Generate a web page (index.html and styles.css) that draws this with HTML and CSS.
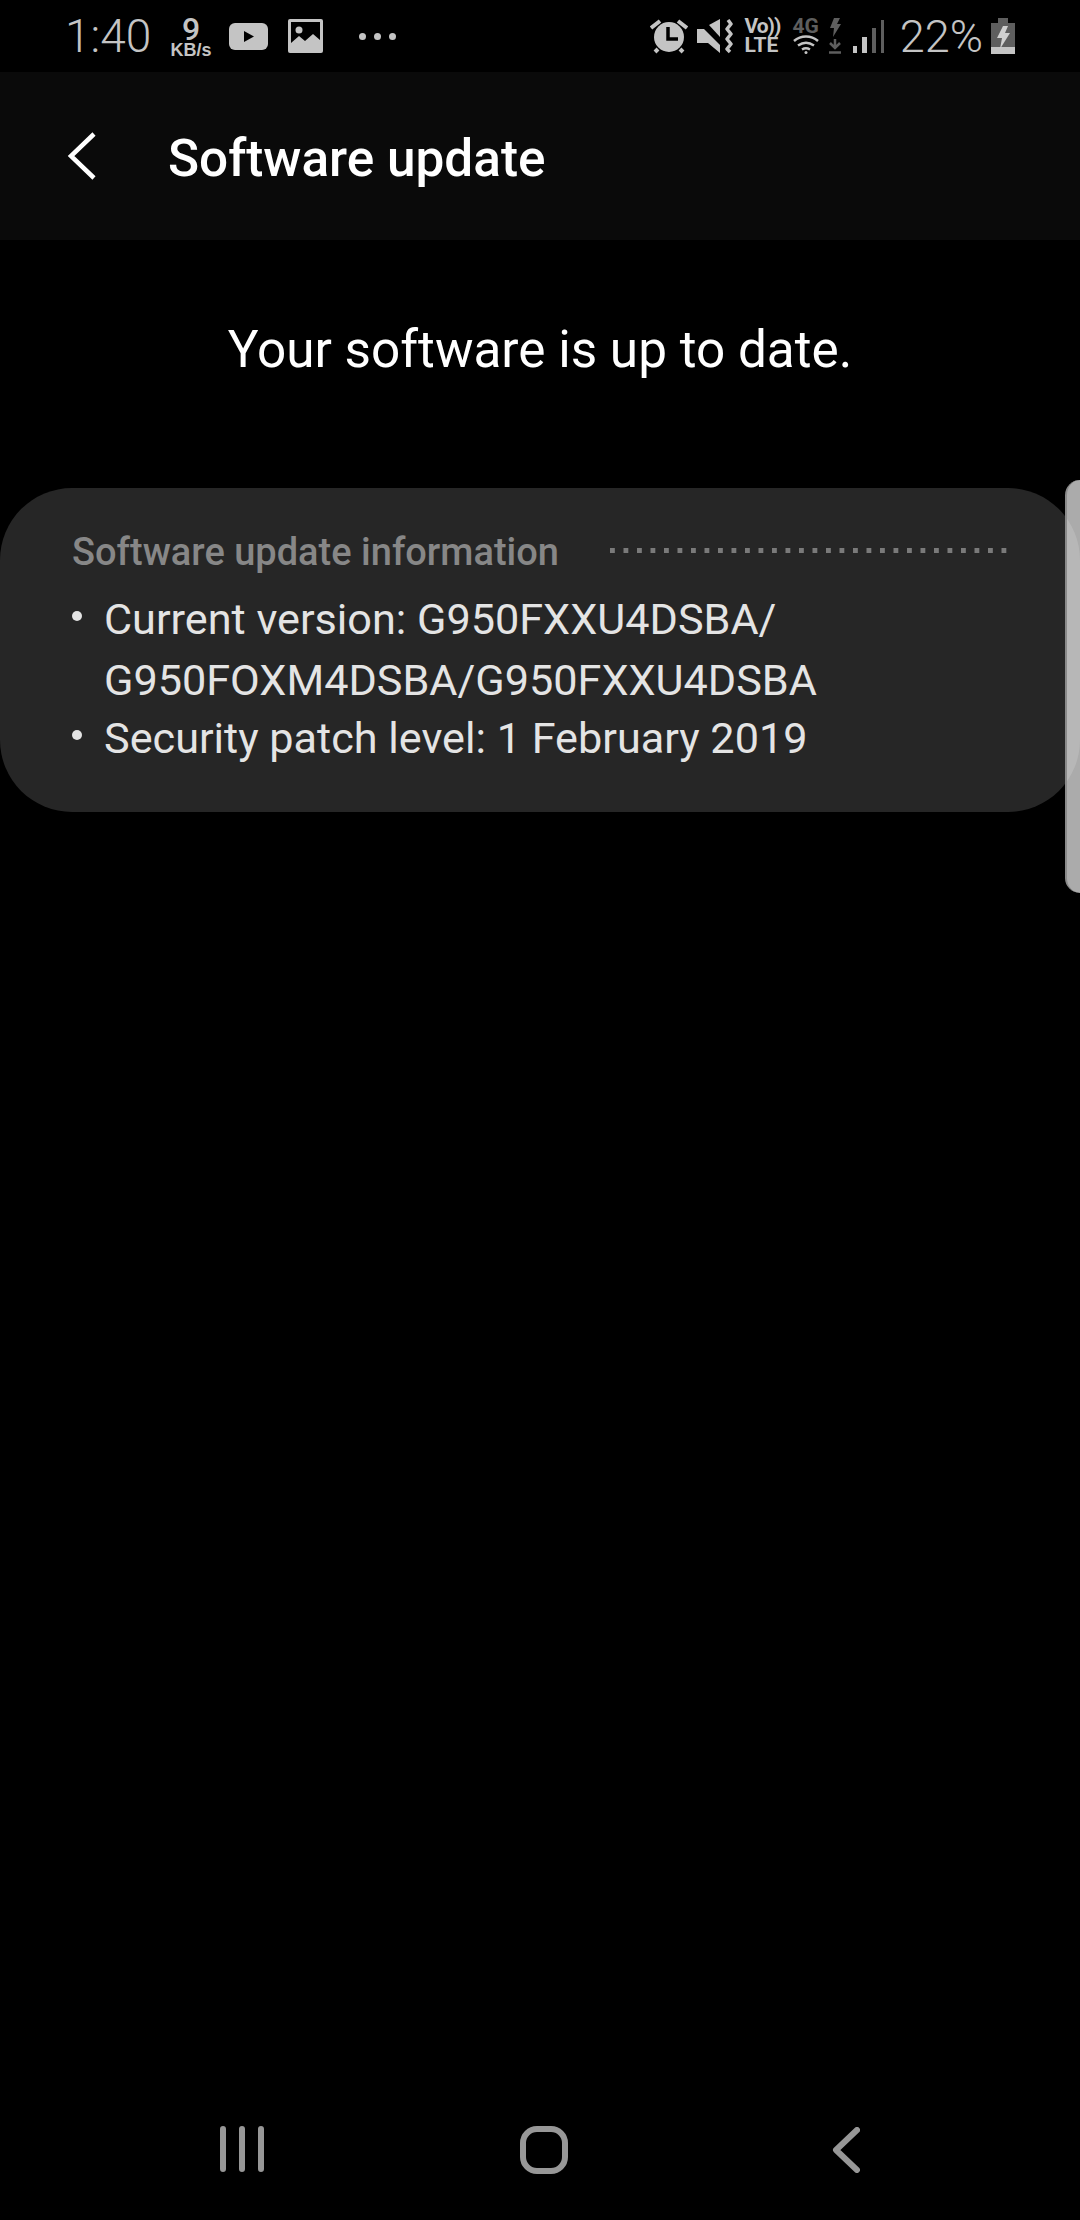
FILE: index.html
```html
<!DOCTYPE html>
<html lang="en">
<head>
  <meta charset="UTF-8">
  <meta name="viewport" content="width=device-width, initial-scale=1.0">
  <title>Software update</title>
  <link rel="stylesheet" href="styles.css">
</head>
<body>
  <div class="status-bar">
    <div class="status-left">
      <span class="clock">1:40</span>
      <span class="net-speed"><b>9</b><i>KB/s</i></span>
      <svg class="ic-yt" width="39" height="27" viewBox="0 0 39 27"><rect width="39" height="27" rx="6" fill="#c4c4c4"/><path d="M15 8l10 5.5L15 19z" fill="#000"/></svg>
      <svg class="ic-pic" width="35" height="34" viewBox="0 0 35 34"><rect width="35" height="34" rx="2" fill="#c4c4c4"/><rect x="3" y="3" width="29" height="25" fill="#000"/><circle cx="11" cy="11" r="3.5" fill="#c4c4c4"/><path d="M3 24l8-7 6 5 8-7 7 6v8H3z" fill="#c4c4c4"/></svg>
      <span class="more"><u></u><u></u><u></u></span>
    </div>
    <div class="status-right">
      <svg class="ic-alarm" width="38" height="36" viewBox="0 0 38 36"><circle cx="19" cy="19" r="15" fill="#c4c4c4"/><path d="M18 9v12h10" fill="none" stroke="#000" stroke-width="3.5"/><path d="M1 10l9-7M37 10l-9-7M8 31l-3 3M30 31l3 3" stroke="#c4c4c4" stroke-width="4" fill="none"/></svg>
      <svg class="ic-mute" width="36" height="35" viewBox="0 0 36 35"><path d="M0 10h7l16 16v8L11 24H0z" fill="#c4c4c4"/><path d="M12 6l11-6v18z" fill="#c4c4c4"/><path d="M31 1l3 4-4 5 4 5-4 5 4 5-4 5 3 3" fill="none" stroke="#c4c4c4" stroke-width="3.5" stroke-linejoin="round"/></svg>
      <span class="volte"><b class="vo">Vo))</b><b>LTE</b></span>
      <span class="wifi">
        <span class="wifi-label">4G</span>
        <svg width="26" height="19" viewBox="0 0 26 19"><path d="M1 6c7-6 17-6 24 0M5 10.5c5-3.500 11-3.500 16 0M9 14.5c2.500-1.500 5.500-1.500 8 0" fill="none" stroke="#c4c4c4" stroke-width="2.5"/><circle cx="13" cy="17.5" r="1.5" fill="#c4c4c4"/></svg>
      </span>
      <svg class="ic-data" width="12" height="36" viewBox="0 0 12 36"><path d="M5 0h6L8 6h4L4 19l1-9H1z" fill="#5e5e5e"/><path d="M6 21v9M1 25l5 5 5-5M0 34.5h12" fill="none" stroke="#5e5e5e" stroke-width="2.5"/></svg>
      <svg class="ic-signal" width="31" height="33" viewBox="0 0 31 33"><rect x="0" y="26" width="4" height="7" fill="#c4c4c4"/><rect x="9" y="17" width="5" height="16" fill="#c4c4c4"/><rect x="19" y="8" width="4" height="25" fill="#5e5e5e"/><rect x="28" y="0" width="3" height="33" fill="#5e5e5e"/></svg>
      <span class="battery-pct">22%</span>
      <svg class="ic-batt" width="24" height="36" viewBox="0 0 24 36"><path d="M7 0h10v5h7v24H0V5h7z" fill="#5e5e5e"/><rect y="29" width="24" height="7" fill="#c4c4c4"/><path d="M12 8h5l-3 7h5L9 31l2-11H6z" fill="#d0d0d0"/></svg>
    </div>
  </div>

  <div class="app-bar">
    <svg class="back" width="30" height="48" viewBox="0 0 30 48"><path d="M28 2L5 24l23 22" fill="none" stroke="#fff" stroke-width="4.5"/></svg>
    <h1>Software update</h1>
  </div>

  <p class="up-to-date">Your software is up to date.</p>

  <div class="info-card">
    <div class="info-head">
      <span class="info-title">Software update information</span>
      <span class="dots"></span>
    </div>
    <ul class="info-list">
      <li>Current version: G950FXXU4DSBA/<br>G950FOXM4DSBA/G950FXXU4DSBA</li>
      <li>Security patch level: 1 February 2019</li>
    </ul>
    <div class="scroll-handle"></div>
  </div>

  <div class="nav-bar">
    <svg width="44" height="46" viewBox="0 0 44 46"><path d="M3 3v40M22 3v40M41 3v40" fill="none" stroke="#979797" stroke-width="6" stroke-linecap="round"/></svg>
    <svg class="nav-home" width="48" height="48" viewBox="0 0 48 48"><rect x="3" y="3" width="42" height="42" rx="14" fill="none" stroke="#979797" stroke-width="6"/></svg>
    <svg class="nav-back" width="28" height="46" viewBox="0 0 28 46"><path d="M25 3L4 23l21 20" fill="none" stroke="#979797" stroke-width="6" stroke-linecap="round" stroke-linejoin="round"/></svg>
  </div>
</body>
</html>
```

FILE: styles.css
```css
html, body {
  margin: 0;
  padding: 0;
  height: 100%;
}
body {
  width: 1080px;
  height: 2220px;
  display: flex;
  flex-direction: column;
  background-color: #000;
  font-family: Roboto, sans-serif;
  overflow: hidden;
}

/* status bar */
.status-bar {
  height: 72px;
  display: flex;
  justify-content: space-between;
  align-items: center;
  padding: 0 65px;
  color: #c4c4c4;
  flex-shrink: 0;
}
.status-left, .status-right {
  display: flex;
  align-items: center;
}
.clock {
  font-size: 46px;
  font-weight: 300;
  width: 103px;
}
.net-speed {
  width: 46px;
  display: flex;
  flex-direction: column;
  align-items: center;
  line-height: 1;
}
.net-speed b {
  font-size: 32px;
  font-weight: 500;
  height: 27px;
  line-height: 27px;
}
.net-speed i {
  font-family: "Liberation Sans", sans-serif;
  font-style: normal;
  font-weight: 700;
  font-size: 18px;
  line-height: 14px;
}
.ic-yt { margin-left: 15px; }
.ic-pic { margin-left: 20px; }
.more {
  display: flex;
  gap: 8px;
  margin-left: 36px;
}
.more u {
  width: 7px;
  height: 7px;
  border-radius: 50%;
  background: #c4c4c4;
}
.status-right svg { display: block; }
.ic-mute { margin-left: 9px; }
.volte {
  margin-left: 11px;
  width: 36px;
  display: flex;
  flex-direction: column;
  line-height: 19px;
}
.volte b {
  font-size: 21px;
  font-weight: 700;
}
.volte .vo { letter-spacing: -1px; }
.wifi {
  margin-left: 12px;
  display: flex;
  flex-direction: column;
  align-items: center;
}
.wifi-label {
  font-size: 21px;
  font-weight: 700;
  line-height: 17px;
  color: #5e5e5e;
}
.ic-data { margin-left: 10px; }
.ic-signal { margin-left: 12px; }
.battery-pct {
  font-size: 45px;
  font-weight: 300;
  margin-left: 16px;
}
.ic-batt { margin-left: 8px; }

/* app bar */
.app-bar {
  height: 168px;
  background-color: #0a0a0a;
  display: flex;
  align-items: center;
  padding-left: 66px;
  flex-shrink: 0;
}
.app-bar h1 {
  margin: 4px 0 0 72px;
  font-size: 51.3px;
  font-weight: 500;
  color: #fff;
}

.up-to-date {
  margin: 0;
  height: 248px;
  padding-top: 79px;
  box-sizing: border-box;
  text-align: center;
  font-size: 51.3px;
  color: #fff;
  flex-shrink: 0;
}

/* info card */
.info-card {
  position: relative;
  height: 324px;
  width: 1080px;
  background-color: #262626;
  border-radius: 72px;
  box-sizing: border-box;
  padding: 41px 0 0 72px;
  flex-shrink: 0;
}
.info-head {
  display: flex;
  align-items: center;
  height: 46px;
}
.info-title {
  font-size: 38px;
  font-weight: 500;
  color: #878787;
}
.dots {
  width: 398px;
  height: 5px;
  margin: -3px 0 0 51px;
  background-image: linear-gradient(to right, #7a7a7a 5px, transparent 5px);
  background-size: 13.5px 5px;
}
.info-list {
  list-style: none;
  margin: 14px 0 0;
  padding: 0;
  font-size: 43.2px;
  line-height: 61px;
  color: #e4e4e4;
}
.info-list li {
  position: relative;
  padding-left: 32px;
}
.info-list li + li { margin-top: -3px; }
.info-list li::before {
  content: "";
  position: absolute;
  left: 0;
  top: 22px;
  width: 10px;
  height: 10px;
  border-radius: 50%;
  background: #e4e4e4;
}
.scroll-handle {
  position: absolute;
  left: 1065px;
  top: -8px;
  width: 15px;
  height: 413px;
  background-color: rgba(255, 255, 255, 0.67);
  border-left: 2px solid #8a8a8a;
  box-sizing: border-box;
  border-radius: 16px 0 0 16px;
}

/* nav bar */
.nav-bar {
  margin-top: auto;
  height: 116px;
  box-sizing: border-box;
  display: flex;
  align-items: flex-start;
  padding: 22px 0 0 220px;
  flex-shrink: 0;
}
.nav-home { margin: 0 0 0 256px; }
.nav-back { margin: 1px 0 0 264px; }
```
